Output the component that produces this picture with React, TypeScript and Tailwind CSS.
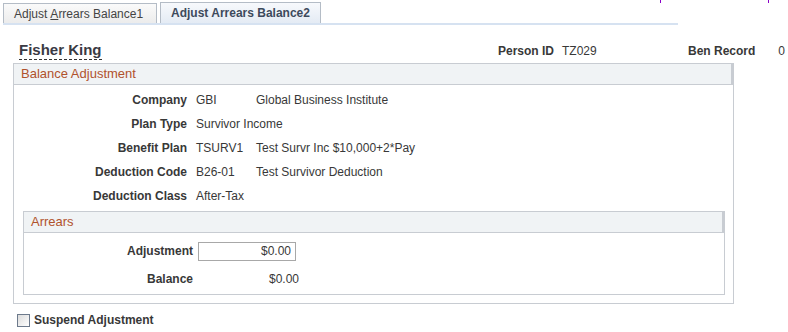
import React from "react";

const rows: [string, string, string?][] = [
  ["Company", "GBI", "Global Business Institute"],
  ["Plan Type", "Survivor Income"],
  ["Benefit Plan", "TSURV1", "Test Survr Inc $10,000+2*Pay"],
  ["Deduction Code", "B26-01", "Test Survivor Deduction"],
  ["Deduction Class", "After-Tax"],
];

function BoxHeader({ title }: { title: string }) {
  return (
    <div className="h-[21px] bg-[#f0f3f5] border-b border-[#c8ccd2] border-r-2 border-r-[#c8ccd2] pl-[7px] flex items-center text-[13px] text-[#b0522c]">
      {title}
    </div>
  );
}

export default function App() {
  return (
    <div
      className="w-[788px] h-[332px] bg-white text-[12px] text-[#383838] relative overflow-hidden"
      style={{ fontFamily: '"Liberation Sans", Arial, sans-serif' }}
    >
      <div className="absolute left-[660px] top-0 w-px h-[3px] bg-[#8a00c8]" />
      <div className="absolute left-[768px] top-0 w-px h-[3px] bg-[#8a00c8]" />

      {/* tabs */}
      <div className="flex items-end pl-[3px] pt-[2px] h-[23px]">
        <div className="h-[20px] w-[154px] border border-b-0 border-[#b4bcc6] bg-gradient-to-b from-[#fafafa] to-[#ececec] flex items-center pl-[10px] text-[#444]">
          Adjust <span className="underline ml-[3px]">A</span>rrears Balance1
        </div>
        <div className="h-[21px] w-[161px] ml-[3px] border border-b-0 border-[#b4bcc6] bg-gradient-to-b from-[#f7f9fc] to-[#e4ebf4] flex items-center pl-[10px] font-bold text-[#3d4a5c]">
          Adjust Arrears Balance2
        </div>
      </div>
      <div className="ml-[3px] w-[675px] h-[2px] bg-[#d6e2f1]" />

      {/* header */}
      <div className="flex items-baseline h-[38px] pt-[14px]">
        <div className="w-[498px] pl-[19px]">
          <span className="text-[15px] font-bold text-[#3a3a44] border-b border-dashed border-[#333] pb-[1px]">
            Fisher King
          </span>
        </div>
        <div className="w-[190px]">
          <span className="font-bold">Person ID</span>
          <span className="ml-[8px]">TZ029</span>
        </div>
        <div>
          <span className="font-bold">Ben Record</span>
          <span className="ml-[23px]">0</span>
        </div>
      </div>

      {/* balance adjustment */}
      <div className="ml-[13px] w-[721px] border border-[#c8ccd2] pb-[8px]">
        <BoxHeader title="Balance Adjustment" />
        <div className="pt-[3px]">
          {rows.map(([label, v1, v2]) => (
            <div key={label} className="flex items-center h-[24px]">
              <div className="w-[173px] text-right font-bold">{label}</div>
              <div className="ml-[9px] w-[60px] whitespace-nowrap">{v1}</div>
              {v2 && <div className="whitespace-nowrap">{v2}</div>}
            </div>
          ))}
        </div>

        <div className="ml-[9px] mt-[3px] w-[702px] border border-[#c8ccd2]">
          <BoxHeader title="Arrears" />
          <div className="flex items-center h-[33px] pt-[3px]">
            <div className="w-[169px] text-right font-bold">Adjustment</div>
            <div className="ml-[5px] w-[98px] h-[19px] border border-[#a8a8a8] text-right pr-[4px] leading-[17px]">
              $0.00
            </div>
          </div>
          <div className="flex items-center h-[28px] pb-[3px]">
            <div className="w-[169px] text-right font-bold">Balance</div>
            <div className="ml-[5px] w-[101px] text-right">$0.00</div>
          </div>
        </div>
      </div>

      {/* suspend */}
      <div className="flex items-center mt-[7px] pl-[17px]">
        <div className="w-[13px] h-[13px] border border-[#6d7a8c] bg-gradient-to-br from-[#dcdcdc] to-white" />
        <span className="ml-[4px] font-bold">Suspend Adjustment</span>
      </div>
    </div>
  );
}
